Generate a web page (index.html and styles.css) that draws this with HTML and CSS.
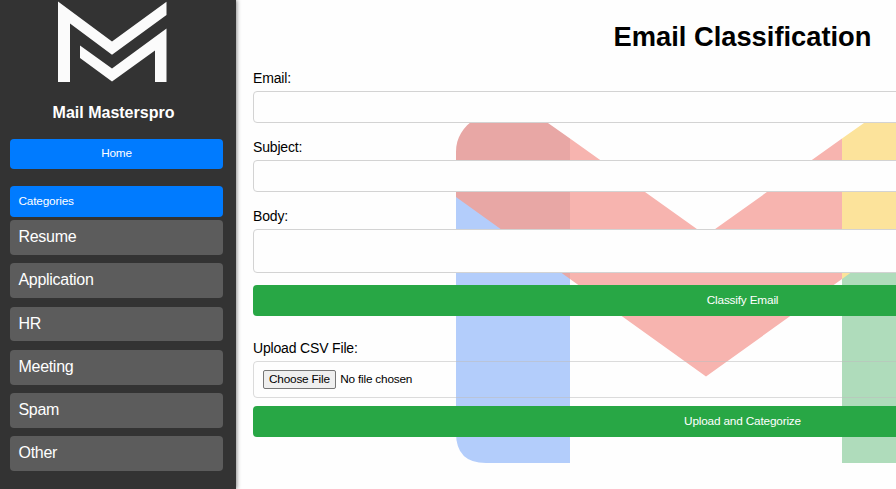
FILE: index.html
```html
<!DOCTYPE html>
<html lang="en">
<head>
<meta charset="utf-8">
<title>Email Classification</title>
<link rel="stylesheet" href="styles.css">
</head>
<body>
<div class="app">
  <aside class="sidebar">
    <svg class="logo" viewBox="0 0 110 82" aria-hidden="true">
      <path d="M0 0.5 54 40.5 108.500 0.700V14L54 53.800 12 22.500V81H0z"/>
      <path d="M22 44.500 54 67.500 108.500 27.500V81H97V49.500L54 80.500 22 57z"/>
    </svg>
    <h2 class="brand">Mail Masterspro</h2>
    <button class="nav-button home">Home</button>
    <button class="nav-button categories">Categories</button>
    <ul class="category-list">
      <li>Resume</li>
      <li>Application</li>
      <li>HR</li>
      <li>Meeting</li>
      <li>Spam</li>
      <li>Other</li>
    </ul>
  </aside>
  <main class="content">
    <svg class="backdrop" viewBox="456 119 500 344" aria-hidden="true">
      <path fill="#b3cdfb" d="M456 196H570V463H486Q456 463 456 433z"/>
      <path fill="#afdcbb" d="M842 272H956V433Q956 463 926 463H842z"/>
      <path fill="#f7b4af" d="M570 138.500 706 235.500 842 138.500V279L706 376.500 570 279z"/>
      <path fill="#e8a7a5" d="M456 197V152C456 125 482 109 514 109Q531 109 548 123L570 138.500V279z"/>
      <path fill="#fce39b" d="M842 138.500 864 123Q881 109 898 109C930 109 956 125 956 152V197L842 279z"/>
    </svg>
    <h1>Email Classification</h1>
    <form class="classify">
      <label for="email">Email:</label>
      <input class="field" id="email" type="text">
      <label for="subject">Subject:</label>
      <input class="field" id="subject" type="text">
      <label for="body">Body:</label>
      <textarea class="field body-field" id="body"></textarea>
      <button class="submit" type="button">Classify Email</button>
    </form>
    <form class="upload">
      <label for="file">Upload CSV File:</label>
      <input class="field file-field" id="file" type="file">
      <button class="submit" type="button">Upload and Categorize</button>
    </form>
  </main>
</div>
</body>
</html>
```
FILE: styles.css
```css
* { box-sizing: border-box; }
body {
  margin: 0;
  background: #fefefe;
  font-family: "Liberation Sans", Arial, sans-serif;
  color: #000;
}
.app { display: flex; height: 489px; overflow: hidden; }
.sidebar {
  flex: 0 0 236px;
  display: flex;
  flex-direction: column;
  padding: 1px 13px 0 10px;
  background: #333;
  color: #fff;
  box-shadow: 1px 0 4px rgba(0, 0, 0, .45);
  z-index: 1;
}
.logo { flex: none; width: 110px; height: 82px; margin-left: 48px; fill: #fbfbfb; }
.brand { margin: 20px 0 16px; padding-right: 6px; font-size: 16px; line-height: 20px; text-align: center; }
.nav-button {
  height: 30px;
  flex: none;
  padding: 0 8.5px 2px;
  border: 0;
  border-radius: 4px;
  background: #007bff;
  color: #fff;
  font: 11.8px "Liberation Sans", Arial, sans-serif;
  letter-spacing: -.18px;
}
.categories { margin: 17px 0 3px; height: 31px; text-align: left; }
.category-list { display: grid; gap: 8.4px; margin: 0; padding: 0; list-style: none; }
.category-list li {
  height: 34.9px;
  padding-left: 8.5px;
  border-radius: 4px;
  background: #5c5c5c;
  font-size: 16px;
  letter-spacing: -.3px;
  line-height: 33px;
}
.content { position: relative; flex: 0 0 1013px; padding: 20px 17px; }
.backdrop { position: absolute; left: 220px; top: 119px; width: 500px; height: 344px; }
h1 { position: relative; margin: 0 0 16px; font-size: 27.3px; line-height: 34px; text-align: center; }
form { position: relative; display: flex; flex-direction: column; }
label { height: 17px; margin-bottom: 4px; font-size: 14px; line-height: 17px; letter-spacing: -.17px; }
.field {
  width: 100%;
  height: 32px;
  margin: 0 0 16px;
  padding: 8px;
  border: 1px solid #d3d3d3;
  border-radius: 4px;
  background: #fefefe;
  resize: none;
}
.body-field { height: 44px; margin-bottom: 12px; }
.submit {
  height: 31px;
  padding: 0 6px 2px;
  border: 0;
  border-radius: 4px;
  background: #28a745;
  color: #fff;
  font: 11.8px "Liberation Sans", Arial, sans-serif;
  letter-spacing: -.18px;
}
.upload { margin-top: 24px; }
.file-field {
  height: 37px;
  margin-bottom: 8px;
  padding-left: 8.500px;
  background: transparent;
  border-color: rgba(190, 190, 190, .55);
  font: 11.8px "Liberation Sans", Arial, sans-serif;
  letter-spacing: -.2px;
}
.file-field::file-selector-button {
  height: 19px;
  margin: 0 4px 0 0;
  padding: 0 5.5px 1px;
  border: 1px solid #767676;
  border-radius: 2px;
  background: #efefef;
  font: 11.8px "Liberation Sans", Arial, sans-serif;
  letter-spacing: -.2px;
}
```
